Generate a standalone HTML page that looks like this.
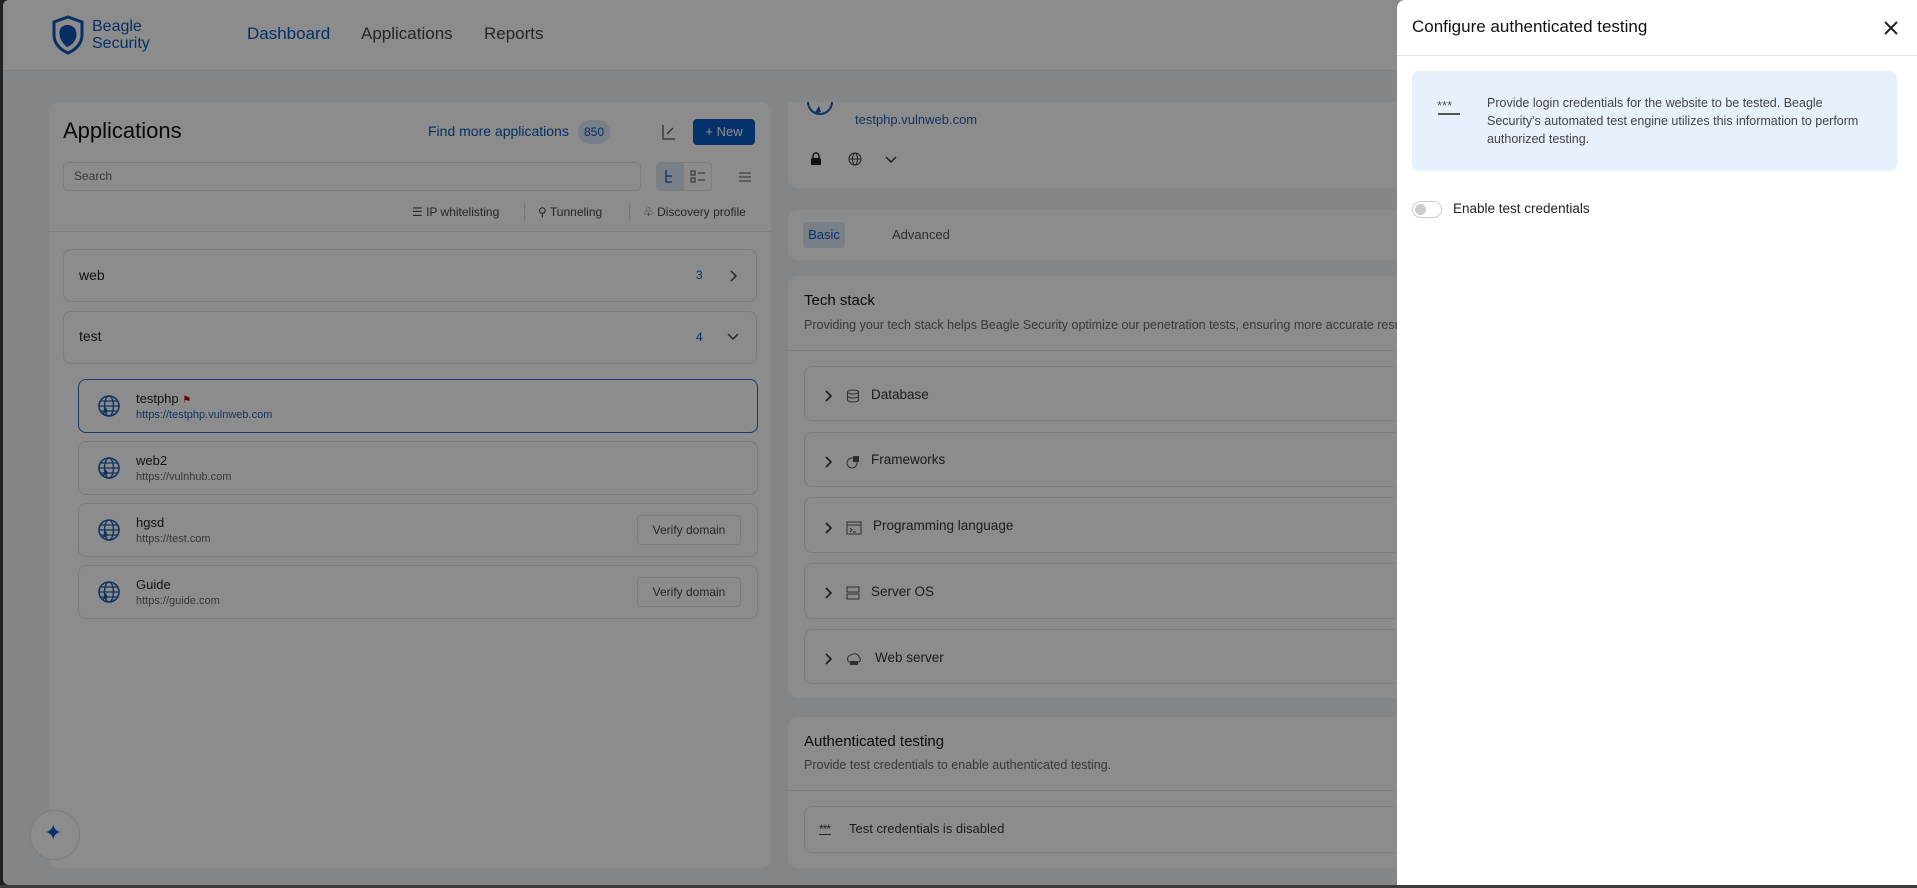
<!DOCTYPE html>
<html><head><meta charset="utf-8"><style>
*{box-sizing:border-box;margin:0;padding:0}
body{width:1917px;height:888px;overflow:hidden;position:relative;font-family:"Liberation Sans",sans-serif;background:#3c3c3c;color:#222}
.a{position:absolute}
#page{left:3px;top:0;width:1914px;height:885px;background:#f1f3f6;border-radius:6px 0 0 6px;overflow:hidden}
.card{position:absolute;background:#fff;border-radius:10px}
.bx{position:absolute;border:1px solid #e2e4e8;border-radius:8px;background:#fff}
.t{position:absolute;white-space:nowrap}
#ov{left:0;top:0;width:1917px;height:885px;background:rgba(0,0,0,0.45)}
svg{position:absolute}
</style></head><body>
<div id="page" class="a">
  <div class="a" style="left:0;top:0;width:1914px;height:71px;background:#fff;border-bottom:1px solid #e4e6ea"></div>
  <svg style="left:47px;top:15px" width="36" height="40" viewBox="0 0 36 40"><path d="M18 2 L32 7 L32 20 C32 29 25 35 18 38 C11 35 4 29 4 20 L4 7 Z" fill="none" stroke="#0a57b8" stroke-width="3"/><path d="M10 14 C14 8 24 9 26 16 C28 22 24 30 17 32 C12 28 8 22 10 14Z" fill="#0a57b8"/></svg>
  <div class="t" style="left:89px;top:18px;font-size:16px;color:#0a57b8;line-height:17px">Beagle<br>Security</div>
  <div class="t" style="left:244px;top:24px;font-size:17px;color:#0a57b8">Dashboard</div>
  <div class="t" style="left:358px;top:24px;font-size:17px;color:#444">Applications</div>
  <div class="t" style="left:481px;top:24px;font-size:17px;color:#444">Reports</div>

  <div class="card" style="left:46px;top:102px;width:722px;height:766px"></div>
  <div class="t" style="left:60px;top:118px;font-size:22px;color:#111">Applications</div>
  <div class="t" style="left:425px;top:123px;font-size:14px;color:#0a57b8">Find more applications</div>
  <div class="a" style="left:575px;top:120px;width:32px;height:24px;border-radius:12px;background:#dce8f8;color:#0a57b8;font-size:12px;text-align:center;line-height:24px">850</div>
  <svg style="left:658px;top:123px" width="16" height="18"><path d="M2 2v14h12" fill="none" stroke="#555" stroke-width="1.3"/><path d="M6 11l6-6" stroke="#555" stroke-width="1.3"/></svg>
  <div class="a" style="left:690px;top:119px;width:62px;height:26px;background:#0a5cc2;border-radius:4px;color:#fff;font-size:13px;line-height:26px;text-align:center">+ New</div>
  <div class="bx" style="left:60px;top:162px;width:578px;height:29px;border-radius:5px"></div>
  <div class="t" style="left:71px;top:169px;font-size:12px;color:#666">Search</div>
  <div class="bx" style="left:653px;top:162px;width:56px;height:29px;border-radius:5px"></div>
  <div class="a" style="left:654px;top:163px;width:27px;height:27px;background:#dde8f6"></div>
  <svg style="left:660px;top:169px" width="14" height="16"><path d="M3 1v12h6M3 7h6" fill="none" stroke="#0a5cc2" stroke-width="1.3"/></svg>
  <svg style="left:687px;top:170px" width="16" height="14"><rect x="1" y="1" width="4" height="4" fill="none" stroke="#444"/><rect x="1" y="8" width="4" height="4" fill="none" stroke="#444"/><path d="M8 3h7M8 10h7" stroke="#444"/></svg>
  <svg style="left:735px;top:170px" width="14" height="14"><path d="M1 3h12M1 7h12M1 11h12" stroke="#555"/></svg>
  <div class="t" style="left:409px;top:205px;font-size:12px;color:#444">☰ IP whitelisting</div>
  <div class="a" style="left:521px;top:203px;width:1px;height:18px;background:#ddd"></div>
  <div class="t" style="left:535px;top:205px;font-size:12px;color:#444">⚲ Tunneling</div>
  <div class="a" style="left:626px;top:203px;width:1px;height:18px;background:#ddd"></div>
  <div class="t" style="left:640px;top:205px;font-size:12px;color:#444">♧ Discovery profile</div>
  <div class="a" style="left:46px;top:231px;width:722px;height:1px;background:#e4e6ea"></div>

  <div class="bx" style="left:60px;top:249px;width:694px;height:53px"></div>
  <div class="t" style="left:76px;top:267px;font-size:14px">web</div>
  <div class="t" style="left:693px;top:268px;font-size:12px;color:#0a5cc2">3</div>
  <svg style="left:726px;top:270px" width="8" height="12"><path d="M2 1l5 5-5 5" fill="none" stroke="#444" stroke-width="1.5"/></svg>
  <div class="bx" style="left:60px;top:311px;width:694px;height:53px"></div>
  <div class="t" style="left:76px;top:328px;font-size:14px">test</div>
  <div class="t" style="left:693px;top:330px;font-size:12px;color:#0a5cc2">4</div>
  <svg style="left:724px;top:333px" width="12" height="8"><path d="M1 1l5 5 5-5" fill="none" stroke="#444" stroke-width="1.5"/></svg>

  <div class="bx" style="left:75px;top:379px;width:680px;height:54px;border-color:#2b66b8"></div>
  <div class="bx" style="left:75px;top:441px;width:680px;height:54px"></div>
  <div class="bx" style="left:75px;top:503px;width:680px;height:54px"></div>
  <div class="bx" style="left:75px;top:565px;width:680px;height:54px"></div>
  <svg style="left:94px;top:393px" width="24" height="26" viewBox="0 0 24 26"><circle cx="12" cy="13" r="10" fill="none" stroke="#1e5fb0" stroke-width="1.6"/><ellipse cx="12" cy="13" rx="4.5" ry="10" fill="none" stroke="#1e5fb0" stroke-width="1.4"/><path d="M2 13h20M4 8h16M4 18h16" stroke="#1e5fb0" stroke-width="1.2"/><path d="M5 21l4-7 2 5z" fill="#1e5fb0"/></svg>
  <svg style="left:94px;top:455px" width="24" height="26" viewBox="0 0 24 26"><circle cx="12" cy="13" r="10" fill="none" stroke="#1e5fb0" stroke-width="1.6"/><ellipse cx="12" cy="13" rx="4.5" ry="10" fill="none" stroke="#1e5fb0" stroke-width="1.4"/><path d="M2 13h20M4 8h16M4 18h16" stroke="#1e5fb0" stroke-width="1.2"/><path d="M5 21l4-7 2 5z" fill="#1e5fb0"/></svg>
  <svg style="left:94px;top:517px" width="24" height="26" viewBox="0 0 24 26"><circle cx="12" cy="13" r="10" fill="none" stroke="#1e5fb0" stroke-width="1.6"/><ellipse cx="12" cy="13" rx="4.5" ry="10" fill="none" stroke="#1e5fb0" stroke-width="1.4"/><path d="M2 13h20M4 8h16M4 18h16" stroke="#1e5fb0" stroke-width="1.2"/><path d="M5 21l4-7 2 5z" fill="#1e5fb0"/></svg>
  <svg style="left:94px;top:579px" width="24" height="26" viewBox="0 0 24 26"><circle cx="12" cy="13" r="10" fill="none" stroke="#1e5fb0" stroke-width="1.6"/><ellipse cx="12" cy="13" rx="4.5" ry="10" fill="none" stroke="#1e5fb0" stroke-width="1.4"/><path d="M2 13h20M4 8h16M4 18h16" stroke="#1e5fb0" stroke-width="1.2"/><path d="M5 21l4-7 2 5z" fill="#1e5fb0"/></svg>
  <div class="t" style="left:133px;top:391px;font-size:13px">testphp <span style="color:#c00;font-size:10px">⚑</span></div>
  <div class="t" style="left:133px;top:409px;font-size:11px;color:#1e5fb0">https://testphp.vulnweb.com</div>
  <div class="t" style="left:133px;top:453px;font-size:13px">web2</div>
  <div class="t" style="left:133px;top:471px;font-size:11px;color:#666">https://vulnhub.com</div>
  <div class="t" style="left:133px;top:515px;font-size:13px">hgsd</div>
  <div class="t" style="left:133px;top:533px;font-size:11px;color:#666">https://test.com</div>
  <div class="t" style="left:133px;top:577px;font-size:13px">Guide</div>
  <div class="t" style="left:133px;top:595px;font-size:11px;color:#666">https://guide.com</div>
  <div class="bx" style="left:634px;top:515px;width:104px;height:30px;border-radius:4px;font-size:12px;color:#444;text-align:center;line-height:28px">Verify domain</div>
  <div class="bx" style="left:634px;top:577px;width:104px;height:30px;border-radius:4px;font-size:12px;color:#444;text-align:center;line-height:28px">Verify domain</div>

  <div class="a" style="left:27px;top:810px;width:50px;height:50px;border-radius:25px;background:#fff;border:1px solid #e4e6ea"></div>
  <div class="t" style="left:41px;top:820px;font-size:22px;color:#0a5cc2">✦</div>

  <div class="card" style="left:785px;top:102px;width:700px;height:86px;border-radius:0 0 10px 10px"></div>
  <svg style="left:803px;top:100px" width="28" height="20"><path d="M2 2 A12 12 0 0 0 26 2" fill="none" stroke="#1e5fb0" stroke-width="2"/><path d="M8 14l5-8 2 6z" fill="#1e5fb0"/></svg>
  <div class="t" style="left:852px;top:112px;font-size:13px;color:#1e5fb0">testphp.vulnweb.com</div>
  <svg style="left:807px;top:152px" width="12" height="14"><path d="M3 6V4a3 3 0 0 1 6 0v2" fill="none" stroke="#222" stroke-width="1.5"/><rect x="1" y="6" width="10" height="7" rx="1" fill="#222"/></svg>
  <svg style="left:845px;top:152px" width="14" height="14"><circle cx="7" cy="7" r="6" fill="none" stroke="#333"/><ellipse cx="7" cy="7" rx="2.5" ry="6" fill="none" stroke="#333"/><path d="M1 7h12" stroke="#333"/></svg>
  <svg style="left:882px;top:156px" width="12" height="8"><path d="M1 1l5 5 5-5" fill="none" stroke="#333" stroke-width="1.5"/></svg>

  <div class="card" style="left:785px;top:210px;width:700px;height:50px"></div>
  <div class="a" style="left:800px;top:222px;width:42px;height:26px;background:#dde8f6;border-radius:3px;color:#0a5cc2;font-size:13px;text-align:center;line-height:26px">Basic</div>
  <div class="t" style="left:889px;top:227px;font-size:13px;color:#555">Advanced</div>

  <div class="card" style="left:785px;top:276px;width:700px;height:422px"></div>
  <div class="t" style="left:801px;top:292px;font-size:15px;color:#111">Tech stack</div>
  <div class="t" style="left:801px;top:318px;font-size:12.5px;color:#666">Providing your tech stack helps Beagle Security optimize our penetration tests, ensuring more accurate results.</div>
  <div class="a" style="left:785px;top:350px;width:700px;height:1px;background:#e4e6ea"></div>
  <div class="bx" style="left:801px;top:366px;width:690px;height:55px"></div>
  <div class="bx" style="left:801px;top:432px;width:690px;height:55px"></div>
  <div class="bx" style="left:801px;top:497px;width:690px;height:56px"></div>
  <div class="bx" style="left:801px;top:563px;width:690px;height:56px"></div>
  <div class="bx" style="left:801px;top:629px;width:690px;height:55px"></div>
  <svg style="left:821px;top:390px" width="8" height="12"><path d="M2 1l5 5-5 5" fill="none" stroke="#333" stroke-width="1.6"/></svg>
  <svg style="left:821px;top:456px" width="8" height="12"><path d="M2 1l5 5-5 5" fill="none" stroke="#333" stroke-width="1.6"/></svg>
  <svg style="left:821px;top:522px" width="8" height="12"><path d="M2 1l5 5-5 5" fill="none" stroke="#333" stroke-width="1.6"/></svg>
  <svg style="left:821px;top:587px" width="8" height="12"><path d="M2 1l5 5-5 5" fill="none" stroke="#333" stroke-width="1.6"/></svg>
  <svg style="left:821px;top:653px" width="8" height="12"><path d="M2 1l5 5-5 5" fill="none" stroke="#333" stroke-width="1.6"/></svg>
  <svg style="left:843px;top:389px" width="14" height="14"><ellipse cx="7" cy="3" rx="5.5" ry="2" fill="none" stroke="#555"/><path d="M1.5 3v8c0 1 2.5 2 5.5 2s5.5-1 5.5-2V3M1.5 7c0 1 2.5 2 5.5 2s5.5-1 5.5-2" fill="none" stroke="#555"/></svg>
  <svg style="left:843px;top:455px" width="14" height="14"><circle cx="6" cy="8" r="5" fill="none" stroke="#555"/><rect x="7" y="1" width="6" height="6" fill="#555"/></svg>
  <svg style="left:843px;top:521px" width="16" height="14"><rect x="1" y="1" width="14" height="12" fill="none" stroke="#555"/><path d="M1 4h14M4 7l2 2-2 2M7 11h3" fill="none" stroke="#555"/></svg>
  <svg style="left:843px;top:586px" width="14" height="14"><rect x="1" y="1" width="12" height="5" fill="none" stroke="#555"/><rect x="1" y="8" width="12" height="5" fill="none" stroke="#555"/></svg>
  <svg style="left:843px;top:652px" width="16" height="14"><path d="M3 10a4 4 0 0 1 2-7 5 5 0 0 1 8 2 3 3 0 0 1 0 5z" fill="none" stroke="#555"/><rect x="4" y="9" width="8" height="4" fill="#555"/></svg>
  <div class="t" style="left:868px;top:387px;font-size:13.5px;color:#333">Database</div>
  <div class="t" style="left:868px;top:452px;font-size:13.5px;color:#333">Frameworks</div>
  <div class="t" style="left:870px;top:518px;font-size:13.5px;color:#333">Programming language</div>
  <div class="t" style="left:868px;top:584px;font-size:13.5px;color:#333">Server OS</div>
  <div class="t" style="left:872px;top:650px;font-size:13.5px;color:#333">Web server</div>

  <div class="card" style="left:785px;top:717px;width:700px;height:151px"></div>
  <div class="t" style="left:801px;top:733px;font-size:15px;color:#111">Authenticated testing</div>
  <div class="t" style="left:801px;top:758px;font-size:12.5px;color:#666">Provide test credentials to enable authenticated testing.</div>
  <div class="a" style="left:785px;top:790px;width:700px;height:1px;background:#e4e6ea"></div>
  <div class="bx" style="left:801px;top:806px;width:690px;height:47px"></div>
  <div class="t" style="left:816px;top:822px;font-size:12px;color:#444;letter-spacing:-1px">***</div>
  <div class="a" style="left:816px;top:834px;width:12px;height:1px;background:#444"></div>
  <div class="t" style="left:846px;top:821px;font-size:13px;color:#333">Test credentials is disabled</div>
</div>
<div id="ov" class="a"></div>

<div class="a" style="left:1397px;top:0;width:520px;height:885px;background:#fff;border-radius:8px 0 0 0"></div>
<div class="t" style="left:1412px;top:17px;font-size:17px;color:#111">Configure authenticated testing</div>
<svg style="left:1883px;top:20px" width="16" height="16"><path d="M2 2l12 12M14 2L2 14" stroke="#222" stroke-width="2"/></svg>
<div class="a" style="left:1397px;top:55px;width:520px;height:1px;background:#e2e4e8"></div>
<div class="a" style="left:1412px;top:71px;width:485px;height:100px;background:#e6f1fd;border-radius:7px"></div>
<div class="t" style="left:1437px;top:98px;font-size:13px;color:#555;letter-spacing:0px">***</div>
<div class="a" style="left:1438px;top:113px;width:22px;height:1.5px;background:#555"></div>
<div class="a" style="left:1487px;top:94px;width:378px;font-size:12.5px;line-height:18px;color:#444">Provide login credentials for the website to be tested. Beagle Security's automated test engine utilizes this information to perform authorized testing.</div>
<div class="a" style="left:1412px;top:201px;width:30px;height:17px;border:1px solid #ccc;border-radius:9px;background:#fff"></div>
<div class="a" style="left:1415px;top:204px;width:11px;height:11px;border-radius:6px;background:#ccc"></div>
<div class="t" style="left:1453px;top:201px;font-size:13.5px;color:#222">Enable test credentials</div>
</body></html>
